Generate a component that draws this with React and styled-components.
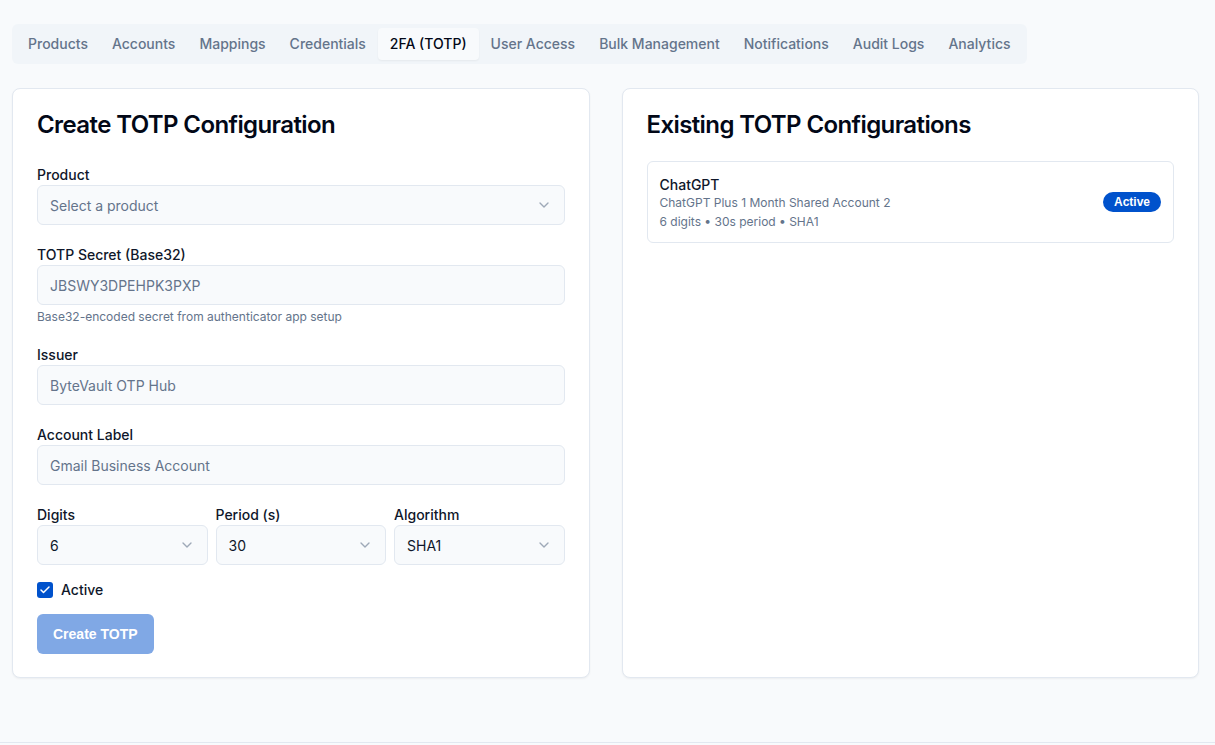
import React from 'react'
import styled, { createGlobalStyle } from 'styled-components'

const GlobalStyle = createGlobalStyle`
  * { box-sizing: border-box; }
  body {
    margin: 0;
    background: #f8fafc;
    font-family: Inter, "Noto Sans", "Liberation Sans", sans-serif;
    color: #0f172a;
  }
`

const Page = styled.div`
  min-height: 743px;
  padding: 24px 16px 0 12px;
  border-bottom: 1px solid #e2e8f0;
`

const TabBar = styled.nav`
  display: inline-flex;
  align-items: center;
  height: 40px;
  padding: 4px;
  background: #f1f5f9;
  border-radius: 6px;
  margin-bottom: 24px;
`

const Tab = styled.button`
  border: none;
  font-family: inherit;
  font-size: 14px;
  font-weight: 500;
  line-height: 20px;
  padding: 6px 12px;
  border-radius: 4px;
  cursor: pointer;
  background: ${p => (p.$active ? '#f8fafc' : 'transparent')};
  color: ${p => (p.$active ? '#020817' : '#64748b')};
  box-shadow: ${p => (p.$active ? '0 1px 2px rgba(0,0,0,0.05)' : 'none')};
`

const Columns = styled.div`
  display: grid;
  grid-template-columns: 1fr 1fr;
  gap: 32px;
`

const Card = styled.section`
  background: #fff;
  border: 1px solid #e2e8f0;
  border-radius: 8px;
  box-shadow: 0 1px 2px rgba(0, 0, 0, 0.05);
  padding: 22px 24px 23px;
`

const Title = styled.h2`
  margin: 0 0 ${p => p.$gap || 26}px;
  font-size: 24px;
  line-height: 28px;
  font-weight: 600;
  color: #020817;
  letter-spacing: -0.6px;
`

const Form = styled.div`
  display: flex;
  flex-direction: column;
  gap: 20px;
`

const Field = styled.div`
  display: flex;
  flex-direction: column;
`

const Label = styled.label`
  font-size: 14px;
  font-weight: 500;
  line-height: 20px;
  color: #0f172a;
`

const Box = styled.div`
  display: flex;
  align-items: center;
  justify-content: space-between;
  height: 40px;
  padding: 0 12px;
  background: #f8fafc;
  border: 1px solid #e2e8f0;
  border-radius: 6px;
  font-size: 14px;
  color: ${p => (p.$filled ? '#0f172a' : '#64748b')};
`

const Hint = styled.p`
  margin: 4px 0 0;
  font-size: 12px;
  line-height: 16px;
  color: #64748b;
`

const Triple = styled.div`
  display: grid;
  grid-template-columns: repeat(3, 1fr);
  gap: 8px;
`

const CheckRow = styled.label`
  display: flex;
  align-items: center;
  gap: 8px;
  margin-top: -4px;
  font-size: 14px;
  font-weight: 500;
`

const Check = styled.span`
  width: 16px;
  height: 16px;
  border-radius: 3px;
  background: #0052cc;
  display: flex;
  align-items: center;
  justify-content: center;
`

const SubmitButton = styled.button`
  align-self: flex-start;
  margin-top: -4px;
  height: 40px;
  padding: 0 16px;
  border: none;
  border-radius: 6px;
  background: #80a8e5;
  color: #fff;
  font-family: "Liberation Sans", Arial, sans-serif;
  font-weight: 700;
  font-size: 14px;
`

const ConfigItem = styled.div`
  display: flex;
  align-items: center;
  justify-content: space-between;
  border: 1px solid #e2e8f0;
  border-radius: 6px;
  padding: 12px;
`

const ItemName = styled.div`
  font-size: 14px;
  line-height: 20px;
  font-weight: 500;
  color: #0f172a;
  margin-top: 1px;
`

const ItemMeta = styled.div`
  font-size: 12px;
  line-height: 16px;
  color: #64748b;
  margin-top: ${p => p.$gap || 0}px;
`

const Badge = styled.span`
  background: #0052cc;
  color: #fff;
  font-family: "Liberation Sans", Arial, sans-serif;
  font-weight: 700;
  font-size: 12px;
  line-height: 16px;
  padding: 2px 11px 2px;
  border-radius: 999px;
`

const Chevron = () => (
  <svg width="16" height="16" viewBox="0 0 24 24" fill="none" stroke="#64748b" strokeWidth="2" strokeLinecap="round" strokeLinejoin="round" style={{ opacity: 0.6 }}>
    <path d="m6 9 6 6 6-6" />
  </svg>
)

const Select = ({ value, filled }) => (
  <Box $filled={filled}>
    <span>{value}</span>
    <Chevron />
  </Box>
)

const tabs = ['Products', 'Accounts', 'Mappings', 'Credentials', '2FA (TOTP)', 'User Access', 'Bulk Management', 'Notifications', 'Audit Logs', 'Analytics']

export default function App() {
  return (
    <Page>
      <GlobalStyle />
      <TabBar>
        {tabs.map(t => (
          <Tab key={t} $active={t === '2FA (TOTP)'}>{t}</Tab>
        ))}
      </TabBar>
      <Columns>
        <Card>
          <Title>Create TOTP Configuration</Title>
          <Form>
            <Field>
              <Label>Product</Label>
              <Select value="Select a product" />
            </Field>
            <Field>
              <Label>TOTP Secret (Base32)</Label>
              <Box>JBSWY3DPEHPK3PXP</Box>
              <Hint>Base32-encoded secret from authenticator app setup</Hint>
            </Field>
            <Field>
              <Label>Issuer</Label>
              <Box>ByteVault OTP Hub</Box>
            </Field>
            <Field>
              <Label>Account Label</Label>
              <Box>Gmail Business Account</Box>
            </Field>
            <Triple>
              <Field>
                <Label>Digits</Label>
                <Select value="6" filled />
              </Field>
              <Field>
                <Label>Period (s)</Label>
                <Select value="30" filled />
              </Field>
              <Field>
                <Label>Algorithm</Label>
                <Select value="SHA1" filled />
              </Field>
            </Triple>
            <CheckRow>
              <Check>
                <svg width="12" height="12" viewBox="0 0 24 24" fill="none" stroke="#fff" strokeWidth="3" strokeLinecap="round" strokeLinejoin="round">
                  <path d="M20 6 9 17l-5-5" />
                </svg>
              </Check>
              Active
            </CheckRow>
            <SubmitButton>Create TOTP</SubmitButton>
          </Form>
        </Card>
        <Card>
          <Title $gap={22}>Existing TOTP Configurations</Title>
          <ConfigItem>
            <div>
              <ItemName>ChatGPT</ItemName>
              <ItemMeta>ChatGPT Plus 1 Month Shared Account 2</ItemMeta>
              <ItemMeta $gap={3}>6 digits • 30s period • SHA1</ItemMeta>
            </div>
            <Badge>Active</Badge>
          </ConfigItem>
        </Card>
      </Columns>
    </Page>
  )
}
